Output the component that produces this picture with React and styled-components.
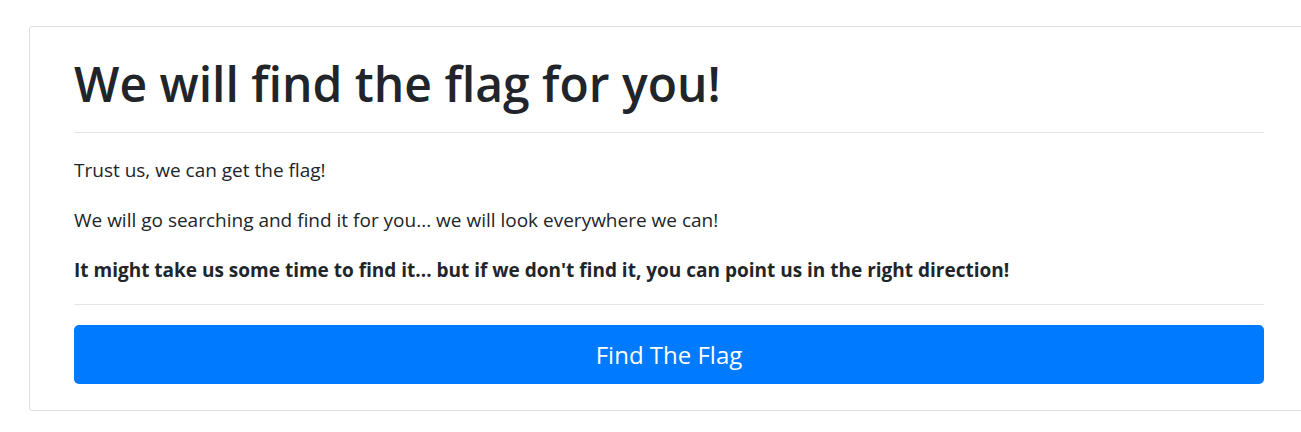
import React from "react";
import styled, { createGlobalStyle } from "styled-components";

const GlobalStyle = createGlobalStyle`
  html, body {
    margin: 0;
    padding: 0;
    overflow: hidden;
    background: #ffffff;
  }
  body {
    font-family: "Open Sans", "Noto Sans", Arial, sans-serif;
    color: #212529;
  }
`;

const Page = styled.div`
  padding: 26px 0 0 29px;
  width: 1320px;
`;

const Card = styled.div`
  display: flex;
  flex-direction: column;
  width: 1280px;
  box-sizing: border-box;
  padding: 28px 44px 26px;
  border: 1px solid rgba(0, 0, 0, 0.125);
  border-radius: 4px;
  background: #ffffff;
`;

const Title = styled.h1`
  margin: 0;
  font-size: 48px;
  font-weight: 600;
  line-height: 58px;
  white-space: nowrap;
`;

const Rule = styled.hr`
  width: 1190px;
  margin: ${(p) => p.$top}px 0 ${(p) => p.$bottom}px;
  border: 0;
  border-top: 1px solid rgba(0, 0, 0, 0.1);
`;

const Text = styled.p`
  margin: 0 0 ${(p) => (p.$last ? 0 : 22)}px;
  font-size: 19px;
  line-height: 28px;
  font-weight: ${(p) => (p.$bold ? 700 : 400)};
  white-space: nowrap;
`;

const Button = styled.button`
  width: 1190px;
  height: 59px;
  border: 0;
  border-radius: 5px;
  background: #007bff;
  color: #ffffff;
  font-family: inherit;
  font-size: 24px;
  cursor: pointer;
`;

export default function App() {
  return (
    <>
      <GlobalStyle />
      <Page>
        <Card>
          <Title>We will find the flag for you!</Title>
          <Rule $top={19} $bottom={23} />
          <Text>Trust us, we can get the flag!</Text>
          <Text>We will go searching and find it for you... we will look everywhere we can!</Text>
          <Text $bold $last>
            It might take us some time to find it... but if we don't find it, you can point us in the right direction!
          </Text>
          <Rule $top={20} $bottom={20} />
          <Button>Find The Flag</Button>
        </Card>
      </Page>
    </>
  );
}
